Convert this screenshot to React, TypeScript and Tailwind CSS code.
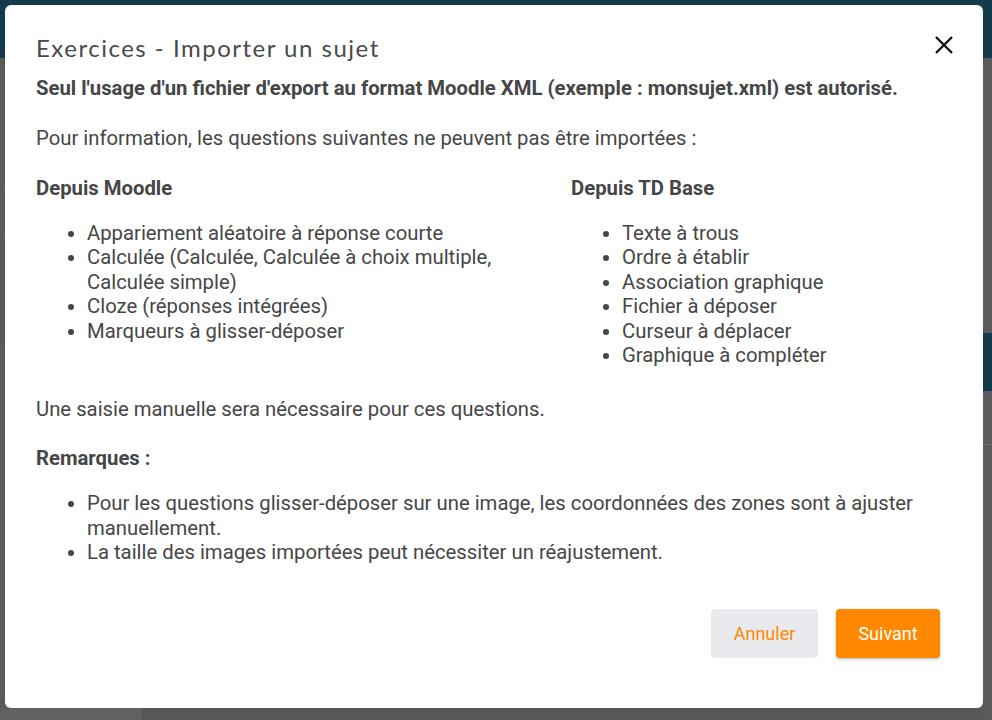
import React from "react";

const body = "font-['Roboto','Liberation_Sans',sans-serif]";

function Bullets({ items }: { items: string[] }) {
  return (
    <ul className="list-disc pl-[51px] text-[20.3px] leading-[24.5px] text-[#464646]">
      {items.map((t) => (
        <li key={t}>{t}</li>
      ))}
    </ul>
  );
}

export default function App() {
  return (
    <div className={`relative w-[992px] h-[720px] overflow-hidden bg-[#5a5a5a] ${body}`}>
      {/* dimmed application behind */}
      <div className="flex flex-col h-full">
        <div className="h-[58px] bg-[#133a4d]" />
        <div className="flex flex-1">
          <div className="flex-1 flex flex-col">
            <div className="h-[134px] border-b border-[#626262]" />
            <div className="h-[45px] border-b border-[#626262]" />
            <div className="h-[105px] mt-[3px] bg-[#555759]" />
            <div className="flex-1" />
            <div className="h-[12px] flex">
              <div className="w-[142px] bg-[#616161]" />
              <div className="flex-1 bg-[#575757]" />
            </div>
          </div>
          <div className="w-[10px] flex flex-col">
            <div className="h-[275px]" />
            <div className="h-[58px] bg-[#133a4d]" />
            <div className="h-[54px] border-b border-[#6a6a6a]" />
          </div>
        </div>
      </div>

      {/* modal */}
      <div className="absolute left-[5px] top-[5px] w-[978px] h-[703px] bg-white rounded-[6px] flex flex-col px-[31px] pt-[27px] text-[#464646]">
        <div className="flex items-start justify-between">
          <h2 className="font-['Lato','Noto_Sans',sans-serif] text-[24px] leading-[32px] tracking-[1.5px] text-[#4a4a4a] font-normal">
            Exercices - Importer un sujet
          </h2>
          <button className="mt-[1px] mr-[-4px] w-[24px] h-[24px] flex items-center justify-center">
            <svg width="20" height="20" viewBox="0 0 20 20" fill="none">
              <path d="M2 2 L18 18 M18 2 L2 18" stroke="#111" strokeWidth="2.4" strokeLinecap="butt" />
            </svg>
          </button>
        </div>

        <p className="mt-[12px] text-[20.3px] leading-[24px] font-bold text-[#464646]">
          Seul l'usage d'un fichier d'export au format Moodle XML (exemple : monsujet.xml) est autorisé.
        </p>

        <p className="mt-[26px] text-[20.3px] leading-[24.5px]">
          Pour information, les questions suivantes ne peuvent pas être importées :
        </p>

        <div className="mt-[25px] grid grid-cols-[520px_1fr] gap-x-[15px]">
          <div>
            <h3 className="text-[20.3px] leading-[24px] font-bold">Depuis Moodle</h3>
            <div className="mt-[21px]">
              <Bullets
                items={[
                  "Appariement aléatoire à réponse courte",
                  "Calculée (Calculée, Calculée à choix multiple, Calculée simple)",
                  "Cloze (réponses intégrées)",
                  "Marqueurs à glisser-déposer",
                ]}
              />
            </div>
          </div>
          <div>
            <h3 className="text-[20.3px] leading-[24px] font-bold">Depuis TD Base</h3>
            <div className="mt-[21px]">
              <Bullets
                items={[
                  "Texte à trous",
                  "Ordre à établir",
                  "Association graphique",
                  "Fichier à déposer",
                  "Curseur à déplacer",
                  "Graphique à compléter",
                ]}
              />
            </div>
          </div>
        </div>

        <p className="mt-[29px] text-[20.3px] leading-[24.5px]">
          Une saisie manuelle sera nécessaire pour ces questions.
        </p>

        <h3 className="mt-[25px] text-[20.3px] leading-[24px] font-bold">Remarques :</h3>
        <div className="mt-[21px] pr-[20px]">
          <Bullets
            items={[
              "Pour les questions glisser-déposer sur une image, les coordonnées des zones sont à ajuster manuellement.",
              "La taille des images importées peut nécessiter un réajustement.",
            ]}
          />
        </div>

        <div className="mt-auto mb-[50px] flex justify-end gap-[18px] pr-[12px]">
          <button className="w-[107px] h-[49px] rounded-[4px] bg-[#e9eaee] text-[#ff8800] text-[18px]">
            Annuler
          </button>
          <button className="w-[104px] h-[49px] rounded-[4px] bg-[#ff8800] text-white text-[18px] shadow-[0_1px_3px_rgba(0,0,0,0.3)]">
            Suivant
          </button>
        </div>
      </div>
    </div>
  );
}
